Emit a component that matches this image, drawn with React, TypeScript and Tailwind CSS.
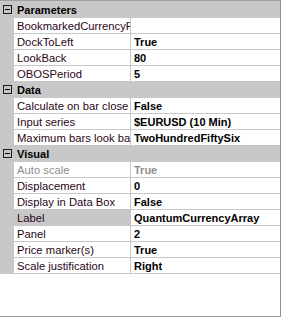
import React from "react";

type Row =
  | { kind: "header"; title: string }
  | { kind: "prop"; label: string; value: string; disabled?: boolean; selected?: boolean };

const rows: Row[] = [
  { kind: "header", title: "Parameters" },
  { kind: "prop", label: "BookmarkedCurrencyPair", value: "" },
  { kind: "prop", label: "DockToLeft", value: "True" },
  { kind: "prop", label: "LookBack", value: "80" },
  { kind: "prop", label: "OBOSPeriod", value: "5" },
  { kind: "header", title: "Data" },
  { kind: "prop", label: "Calculate on bar close", value: "False" },
  { kind: "prop", label: "Input series", value: "$EURUSD (10 Min)" },
  { kind: "prop", label: "Maximum bars look back", value: "TwoHundredFiftySix" },
  { kind: "header", title: "Visual" },
  { kind: "prop", label: "Auto scale", value: "True", disabled: true },
  { kind: "prop", label: "Displacement", value: "0" },
  { kind: "prop", label: "Display in Data Box", value: "False" },
  { kind: "prop", label: "Label", value: "QuantumCurrencyArray", selected: true },
  { kind: "prop", label: "Panel", value: "2" },
  { kind: "prop", label: "Price marker(s)", value: "True" },
  { kind: "prop", label: "Scale justification", value: "Right" },
];

function MinusBox() {
  return (
    <div className="relative ml-[3px] mt-[3px] h-[9px] w-[9px] shrink-0 border border-[#1a1a1a] bg-[#c8c8c8]">
      <div className="absolute left-[1px] top-[3px] h-[1px] w-[5px] bg-[#000]" />
    </div>
  );
}

export default function App() {
  return (
    <div
      className="h-[318px] w-[282px] bg-white"
      style={{ fontFamily: '"Liberation Sans", Arial, sans-serif' }}
    >
      <div className="flex h-[317px] w-[281px] flex-col border-t border-r border-b border-[#a0a0a0] border-r-[#909090]">
        <div className="h-[1px] w-full bg-[#c8c8c8]" />
        {rows.map((r, i) =>
          r.kind === "header" ? (
            <div key={i} className="flex h-[16px] w-[280px] shrink-0 bg-[#c8c8c8]">
              <MinusBox />
              <div className="ml-[5px] text-[11px] font-bold leading-[17px] text-black">{r.title}</div>
            </div>
          ) : (
            <div key={i} className="flex h-[16px] w-[280px] shrink-0 bg-[#c8c8c8]">
              <div
                className={
                  "ml-[14px] h-[15px] w-[116px] shrink-0 overflow-hidden whitespace-nowrap pl-[3px] text-[11.25px] leading-[17px] " +
                  (r.selected ? "bg-[#c8c8c8] " : "bg-white ") +
                  (r.disabled ? "text-[#8d8d8d]" : "text-[#2a0618]")
                }
              >
                {r.label}
              </div>
              <div
                className={
                  "ml-[1px] h-[15px] w-[149px] shrink-0 overflow-hidden whitespace-nowrap bg-white pl-[3px] text-[11px] font-bold leading-[17px] " +
                  (r.disabled ? "text-[#8d8d8d]" : "text-black")
                }
              >
                {r.value}
              </div>
            </div>
          )
        )}
        <div className="flex-1 bg-white" />
      </div>
    </div>
  );
}
